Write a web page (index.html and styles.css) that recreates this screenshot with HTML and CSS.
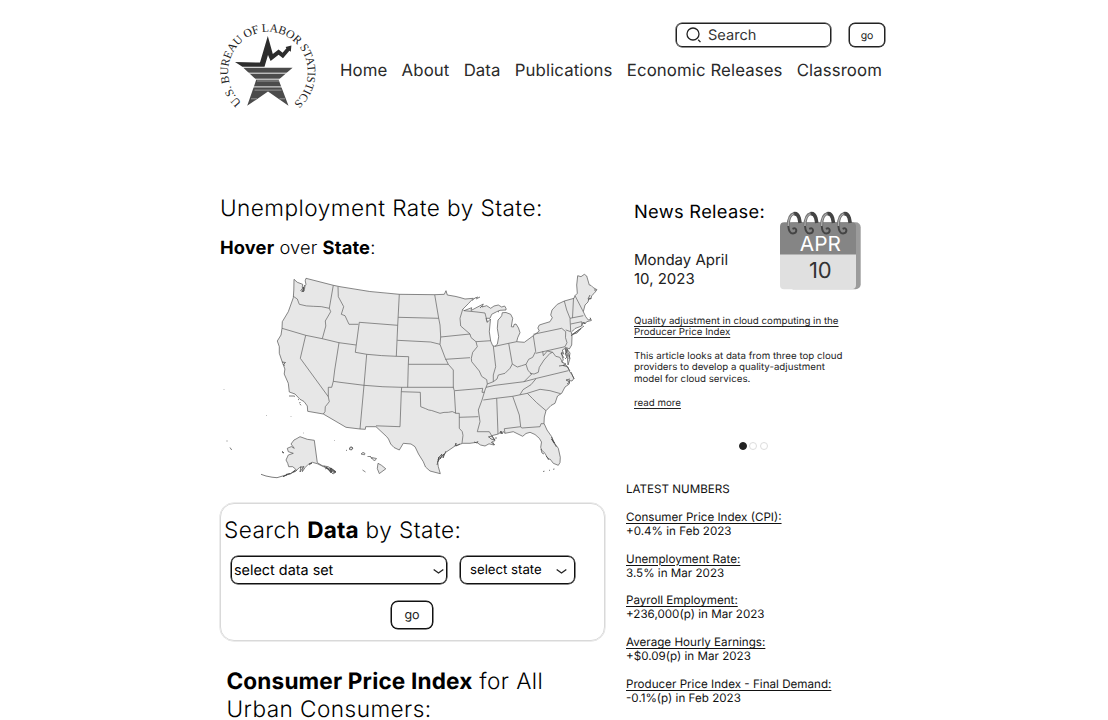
FILE: index.html
```html
<!DOCTYPE html>
<html lang="en">
<head>
<meta charset="utf-8">
<title>U.S. Bureau of Labor Statistics</title>
<link rel="stylesheet" href="styles.css">
</head>
<body>
<div class="page">
  <header class="header">
    <svg class="logo" viewBox="216 16 104 98" role="img" aria-label="U.S. Bureau of Labor Statistics">
      <defs><path id="ring" d="M241.6 102.5 A39.8 40.5 0 1 1 294.4 102.5 L293 104"/></defs>
      <text class="logo-text"><textPath href="#ring" textLength="195" startOffset="0">U.S. BUREAU OF LABOR STATISTICS</textPath></text>
      <path fill="#2d2d2d" d="M235 61.9 L260 62.6 L267.8 36 L272.8 54 L278.6 49.6 L282.6 52.8 L286.4 48.2 L285.6 47 L291.4 45.6 L290.8 51.8 L289.4 50.8 L283 58.2 L278.6 54.8 L270.6 61 L268 55 L264.5 66.8 L242.4 66.8Z"/>
      <path fill="#4b4b4b" d="M243.3 67.8 H292.6 L278.6 79.8 L288.5 105.8 L268 91.6 L247.2 105.8 L256.2 79.8Z"/>
      <path stroke="#fff" stroke-width=".9" d="M240 73.2H296 M245 79.2H290 M245 86.9H290"/>
      <path stroke="#aaa" stroke-width=".8" d="M257 81H279 M254.5 90.1H281.5 M251 98.8H257 M279.5 98.8H285"/>
    </svg>
    <div class="header-right">
      <form class="search">
        <label class="search-box">
          <svg class="glass" viewBox="0 0 16 16"><circle cx="7" cy="7" r="6" /><path d="M12.2 12.7l2.3 2.4"/></svg>
          <span>Search</span>
        </label>
        <button type="button" class="go-small">go</button>
      </form>
      <nav class="nav"><a>Home</a><a>About</a><a>Data</a><a>Publications</a><a>Economic Releases</a><a>Classroom</a></nav>
    </div>
  </header>
  <main class="main">
    <section class="left">
      <h1 class="title">Unemployment Rate by State:</h1>
      <p class="hint"><b>Hover</b> over <b>State</b>:</p>
      <svg class="map" viewBox="220 265 390 220">
        <path class="land" d="M294 279.3l3.3 3 5.4 2-.5 3 1.6 1-2.1 3.4 2.5-.7.8-5 1-1.7-.8-3.5.8-2.5L333.3 285.3 340 286.7 Q370 292.5 399.3 294.3L434.7 294.7 444.3 294.3 446 290.7 447.3 295 455 296.3 460 297.5 465 299 473.3 298.3 468.7 303.3 462.7 309.3 464 310.7 471.7 307.7 471 310.5 477 307.3 483.3 304 482 307 486.7 305.7 490.7 308.3 494 306 498.3 305 501.7 307 504.6 306 506 308.3 506 310 500 310.3 496.7 311.7 491.7 314.3 490 318.3 486 318.3 487.3 322.3 490.5 319 489.3 331.7 490.7 341 492.7 345.7 495 346.3 497.3 344.3 498.7 336.7 497.3 328.3 498 320 500 318 501.7 315.7 502.3 312.7 506 312.5 510.7 314.3 512.7 318.3 511.3 326.7 513.5 327 514 324.5 516 324 518.5 328 520 332.7 517.7 337.7 516.7 341.7 524.3 342.3 533.3 335.7 539.3 331 537.8 328 539.3 325 544 323.5 550 321.7 552.3 317.7 550.7 315 552 310 557.3 304.3 564.3 301 574 298.3 575 295.7 577.3 293.3 576.7 285 577.7 275.7 581 276.7 584.3 274.3 586.7 276 589.3 285 591 285.4 593.3 287.7 597 289.7 594 293.5 591.7 295.7 591 299 589 298.3 588 302 585 305 583.3 311.7 585.7 316.7 588.3 320 590.7 319.3 590.2 317.8 591.4 320.5 586.7 321.7 585 324 583.3 322.3 581.7 326 575 328.5 572.7 331 571.3 332.3 572 336.7 571.7 345 569.3 349 566.7 347.7 568 352.3 570 358.3 568 365 567.3 357 565.5 352.3 566 347.8 562.3 350 563.8 354 561.5 353.5 563.3 360 561.5 362 566 364 563 365.5 568 367 569.3 371 571.7 374.3 574 378.3 572 381 569 380.5 569.3 384 565 387 561.7 393.3 557.5 396 555 403.3 551 405.5 546 410.7 544.3 417 544 423.3 547 430 551.7 436.7 553 441 558.3 448.3 560.3 457.3 560 462.5 558.3 465.3 553.3 463.3 550 459 548.2 459.5 545 453.3 541.5 450 540.7 447.3 541.5 442 539.3 438.3 535 434.5 530 432.3 526 433.5 522.7 436.3 518 434 513.3 431.7 505 433.3 503 431.5 502 434 501 431.5 498.3 434 491.7 435.7 495 440.7 492.5 441.5 494 445 489 443.8 485 446 480.5 445 476.7 442.3 470 443.3 462.7 443.3 455 446 446.7 451.7 442 456 437.7 461.7 438.3 466.7 440.3 473.7 430 471 425.5 467 423.3 461.7 418.5 454 415 446.7 411 444 403.3 443.3 399.3 450 394 447.5 390.7 444 388.5 439 386.7 436.7 376 426.7 365.7 426.7 365.3 429.3 360 429 346 427.3 323.3 414 307.7 411.3 307.3 406 304 401.5 300 399.3 295 394 289.3 392 288.3 383.3 284.2 374 284.9 369 282.7 363.3 279.3 353.3 279.3 346.7 277.3 341 281 335 282 328.3 282.3 321.7 288.3 311.7 293.3 297.7 293.8 290Z"/>
        <path class="line" d="M293.3 296.3l4 2.7 2 5.3q7 2.2 14 2 8-.3 16 2M333.3 285.3l-4 23 1.4 3.4-5.4 9.3.5 5-3.5 12.7M282 328.3l23.7 7 16.6 3.4 16.7 4 17 2.3M305.7 335.3l-5.4 23 28 38.4 1 5-4 5-.3 5-1.7 2.3M339 342.7l-4.3 27.3-1.4 11.3-1.6 6-3.4 0v9.4M333.3 381.3l6.7 1 24 3q19 1.9 37.7 2h52M338 286.7l.3 10 5.4 10-2.4 7.6 3.7 1.4 4 8.6h9.3M359.3 322.3l-4 30 11.4 2q15 1.6 29.6 2l12.4.4-.4 7.6h40M359.3 322.3l38.4 3-1.4 31M399.3 294.3l-1.6 31M398.3 317.3l40.4 1M397.3 340.3l33.4 1.7 9.3 2.3 5.3 14 3 6 5 5.7v17.3l1 3.4 1.3 22.6M408.3 364.3l-.6 23M366.7 354.3l-2.7 31-4 43.7M401.7 387.3l-.4 4.4-1.3 35-24-.9M401.3 391.7l19 .6.4 14.4 5 2 3 1.3 3 .5 8.3 2.8 4-.9 4.3-.1 4-.7 3.7 1.7h3.3v15q4 3 3.7 7l-1 8M459.3 417.3l19-.6M434.7 294.7l4 23.6 1.3 6.7.7 12-.7 7.3M440.7 337l29.3-3 1 3.5 5 4.2 1.3 5-4.6 5.6-1.4 6 .4 3.4 7.6 9.3 2.4 5.4 5 3.3.6 4.3-2.3 6-3 10-3.7 10 1.7 11.7-2.7 10h12l2.4 4M454.7 390.7l28-2.4-.7 4h2.3M445.3 359.3l24.7-1.6M464 310.7 477 312l8 1 2.3 9.3M462.7 309.3l-2.7 9 .7 7.7 9.3 8M476 341.7l14.7-1M493.3 346l2.4 20.7-2.4 8.3v6.7l-6 2.3M495 346.3l13.7-3 8-1.6M508.7 343.3l3.6 20.7 5 3 4.4-1.3 4.3-1.4 2.7-5 4-2 3-6-2.4-15.6M512.3 364l-2.3 4.3-5 5-6.7 1.7-1.3 4-3.7 2.7M486 387.3l9-2 29-3.6 12.7-3.4 31.6-7.6M524 381.7l7.7-7.7-3.7-3.5-2-6.2M530 373.3q4 2 8.3-1l1-5 4.7-7.3 6-6.7 2.7-1-5.4-1.3-4 4.7-.6-4.4M535.7 353.3l29.3-6.6 2-4-1.5-5 .2-6-4-3.4-28.4 6M552.7 352.3l3 4 4 1 3.6 6M564.3 301l2.4 9 3.3 8.3.7 13.4-5-1.8M573.5 298.3l-1 19.5M575 295.7l8.3 16M570 318.3l13.3-2.6M570.7 324l11-2.3v4.3M483.3 400l12.7-1.7 16.7-2 14.6-3 12.7-4 10 1.4 10.7 3M520 394.7l3-5 8-5 5-6M496.7 398.3l1.3 35.7M512.7 396.3l6.6 18.7 1.4 11.7 1 1.3 18.3-1.3 1-3h3M520.7 426.7l-16.4 2 .7 4.6M527.3 393.3l5 5 4.4 4.4 9.3 8M565.7 347l2 9 2.3 0"/>
        <path class="land" d="M291 444l3-4 2-1 4-2.3 7.3 2.6 7 1 3 22.4 5 3 6 1 7.7 5-2 1-8.4-5-8.3-4-5-1.4-4 2-3 3-3 4.4 1-5-4 1-4.3 4-2.3.5 3-3-3-2.5-4 0-1-3.4-1.7-3.3 2.3-5 5-1.7-5-1.6-1-3.4 4-1.7 3 1.7ZM365.5 472l-3-2M572 334.5l9-6-4 4.5Z"/>
        <path class="shore" d="M300.5 291l3-4-.5 5 1.5-7M282 362l3.5.5-2 2 1.5 1M295 470.5l-5 3.5-4 .5 4-1-7 3.2 4-2-10 3-5-.5-6-1.2-5-1.7M297 470l-7 4M301 466l-1 6 4-6M309 464l3-1-3 2M324 466l8 6-2-4 5 4-9-5 7 7 3-2-5-4 0 5-4-5-2 1M282 451l2 2-2-.6M289 396l5 0 1 .5M298 399.5l1 .2M300 404l1 1.3M299 403l1.5-.5M227 440.5v1M230 447.5l1 1.5.7 1M346 450.5l1-.3M349 448.5l2-1.8 2 1.3-1.5 2ZM266.5 415v.5M291 416.5v.5M334.5 440v.5M224 389v.5M303.5 433l.5 0M437 465l2-8 3-3-2 5 4-5-1 4 3-7M438 462l1-5-1 3M455 446l1-3v3l4-2M474 442l3 1 1-2M488 437l4-1 3 4-4-1-2-2M491 442l4 3M495 438l2 0M500 434l1-3 1 3M541 449l1 4 2 1M551.5 437l3 6-3-4 5 8M546 456l3 3M543 471.5l1.5-.3M549 470.5l1-.4M553 469.3l1.5-.3M472 300.5l3-2.5 3-1M476 299l4-2M480 308l2-2M498 312l1-.5M565 349l2 3-2 2 2 3-2 2M567 349l3 4-1 6M563 352l-2 1 3 5M559 366l7-1 4 6M571 372l3 7M570 379l-4 1 4 2-3 2M571 336l9-7 4-3M582 323l2 0M584 324l1-2M588 300l3-2M588 299l2-4M596 290l-2 0"/>
        <path class="land" d="M361 454q2-3 4-.5 0 2-2 1ZM367.5 456.5l3 0M370 456l2 3M371.5 457.5l5 1-2 2.5-2-2ZM378 463.3l3.5 2 4.3 3.5-6.5 4.8-2-5ZM349 449q2-3 4-1l-2 2Z"/>
      </svg>
      <form class="finder">
        <h2 class="title">Search <b>Data</b> by State:</h2>
        <div class="selects">
          <div class="select set"><span>select data set</span><svg class="chev" viewBox="0 0 10 6"><path d="M.6 1.2 5 4.4 9.4 1.2"/></svg></div>
          <div class="select state"><span>select state</span><svg class="chev" viewBox="0 0 10 6"><path d="M.6 1.2 5 4.4 9.4 1.2"/></svg></div>
        </div>
        <button type="button" class="go">go</button>
      </form>
      <h2 class="title cpi"><b>Consumer Price Index</b> for All<br>Urban Consumers:</h2>
    </section>
    <aside class="right">
      <section class="news">
        <div class="news-top">
          <div>
            <h2 class="news-title">News Release:</h2>
            <p class="date">Monday April<br>10, 2023</p>
          </div>
          <svg class="calendar" viewBox="780 210 82 81">
            <rect x="788" y="222.3" width="72.7" height="67" rx="5" fill="#9b9b9b"/>
            <path fill="#e0e0e0" d="M780 253h76v32q0 4.3-5 4.3h-67q-4 0-4-4.3Z"/>
            <path fill="#858585" d="M780 254.4v-27.8q0-4.3 4.3-4.3H852q4 0 4 4.3v27.8Z"/>
            <g id="r1"><path fill="none" stroke="#444" stroke-width="3.6" d="M793.5 213.8q4-1 5.6 4.2l1 5"/><path fill="none" stroke="#777" stroke-width="3" d="M788.4 226q-.4-11 5.8-12.6"/><path fill="none" stroke="#b5b5b5" stroke-width="1" d="M788.2 226q0-10 5-12"/><path fill="none" stroke="#444" stroke-width="2" d="M788.3 226q.6 7.5 4.6 7.5 3.5-.2 3.4-3.4-.5-2.8-3.8-1.3"/></g>
            <use href="#r1" x="16.7"/><use href="#r1" x="33.4"/><use href="#r1" x="50.1"/>
            <text class="cal-month" x="820.3" y="250.8">APR</text>
            <text class="cal-day" x="820.3" y="278">10</text>
          </svg>
        </div>
        <div class="article">
          <p><a class="link">Quality adjustment in cloud computing in the<br>Producer Price Index</a></p>
          <p>This article looks at data from three top cloud<br>providers to develop a quality-adjustment<br>model for cloud services.</p>
          <p><a class="link">read more</a></p>
        </div>
        <div class="dots"><i class="on"></i><i></i><i></i></div>
      </section>
      <section class="numbers">
        <p>LATEST NUMBERS</p>
        <p><a class="link">Consumer Price Index (CPI):</a><br>+0.4% in Feb 2023</p>
        <p><a class="link">Unemployment Rate:</a><br>3.5% in Mar 2023</p>
        <p><a class="link">Payroll Employment:</a><br>+236,000(p) in Mar 2023</p>
        <p><a class="link">Average Hourly Earnings:</a><br>+$0.09(p) in Mar 2023</p>
        <p><a class="link">Producer Price Index - Final Demand:</a><br>-0.1%(p) in Feb 2023</p>
      </section>
    </aside>
  </main>
</div>
</body>
</html>
```
FILE: styles.css
```css
* { box-sizing: border-box; margin: 0; padding: 0; }
body { font-family: Inter, sans-serif; color: #000; background: #fff; text-rendering: geometricPrecision; }
button { font-family: inherit; background: #fff; color: #222; text-rendering: inherit; }
.page { width: 668px; margin-left: 220px; }
.header { display: flex; height: 195px; padding-top: 16px; color: #2a2a2a; }
.logo { width: 104px; height: 98px; margin-left: -4px; flex: none; }
.logo-text { font: 11.7px "Liberation Serif", serif; fill: #222; }
.header-right { margin-left: 20px; padding-top: 7px; width: 548px; }
.search { display: flex; justify-content: flex-end; gap: 18px; padding-right: 3px; }
.search-box { display: flex; align-items: center; width: 155px; height: 24px; border: 1px solid #222; box-shadow: 0 0 0 .5px #222; border-radius: 6px; padding-left: 9px; gap: 6px; font-size: 14.6px; color: #333; }
.glass { width: 16px; height: 16px; fill: none; stroke: #222; stroke-width: 1.3; }
.go-small { width: 36px; height: 24px; border: 1px solid #222; box-shadow: 0 0 0 .5px #222; border-radius: 6px; font-size: 10.5px; }
.nav { display: flex; gap: 14.2px; margin-top: 12.5px; line-height: 22px; font-size: 16.8px; white-space: nowrap; letter-spacing: .1px; }
.main { display: flex; }
.left { width: 385px; flex: none; }
.title { font-size: 22.6px; line-height: 28px; font-weight: 300; white-space: nowrap; letter-spacing: .45px; }
b { font-weight: 700; letter-spacing: .15px; }
.hint { margin-top: 13px; font-size: 18.3px; line-height: 24px; font-weight: 300; letter-spacing: .1px; }
.map { display: block; width: 390px; height: 220px; margin-top: 5px; }
.land { fill: #e7e7e7; stroke: #555; stroke-width: .7; stroke-linejoin: round; }
.line { fill: none; stroke: #606060; stroke-width: .7; }
.shore { fill: none; stroke: #444; stroke-width: .7; }
.finder { width: 385px; height: 138px; margin-top: 18px; border: 1px solid #d9d9d9; box-shadow: 0 0 0 .5px #d9d9d9; border-radius: 14px; padding: 13px 3px 0; }
.selects { display: flex; gap: 13px; margin: 11px 0 0 7px; }
.select { display: flex; align-items: center; justify-content: space-between; height: 28px; border: 1px solid #111; box-shadow: 0 0 0 .5px #111; border-radius: 7px; }
.set { width: 216px; padding: 1px 2px 0 2px; font-size: 14.4px; }
.state { width: 115px; padding: 0 7px 0 9px; font-size: 13.2px; }
.chev { width: 11px; height: 7px; fill: none; stroke: #222; stroke-width: 1.2; margin-top: 2px; }
.go { display: block; width: 42px; height: 28px; margin: 17px 0 0 167px; border: 1px solid #111; box-shadow: 0 0 0 .5px #111; border-radius: 7px; font-size: 12.5px; }
.cpi { margin: 27px 0 0 6.5px; height: 53px; }
.right { margin-left: 21px; width: 260px; }
.news { padding: 5px 0 0 8px; }
.news-top { display: flex; height: 111px; }
.news-top > div { width: 146px; white-space: nowrap; }
.news-title { font-size: 18.3px; line-height: 24px; font-weight: 400; letter-spacing: .3px; }
.date { margin-top: 27px; font-size: 15px; line-height: 18.5px; color: #222; }
.calendar { width: 82px; height: 81px; margin-top: 10px; flex: none; }
.cal-month { font-size: 20.8px; fill: #fff; text-anchor: middle; }
.cal-day { font-size: 22px; fill: #333; text-anchor: middle; }
.article { margin-top: 4.7px; font-size: 9.72px; line-height: 11.7px; color: #222; white-space: nowrap; }
.article p + p { margin-top: 11.7px; }
.link { text-decoration: underline; text-underline-offset: 2px; text-decoration-thickness: 1px; }
.dots { display: flex; gap: 2.3px; margin: 32.4px 0 0 105px; }
.dots i { width: 8px; height: 8px; border: 1px solid #ddd; border-radius: 50%; }
.dots .on { background: #222; border-color: #222; }
.numbers { margin-top: 33.3px; font-size: 11.63px; line-height: 13.93px; color: #111; white-space: nowrap; }
.numbers p + p { margin-top: 13.93px; }
```
